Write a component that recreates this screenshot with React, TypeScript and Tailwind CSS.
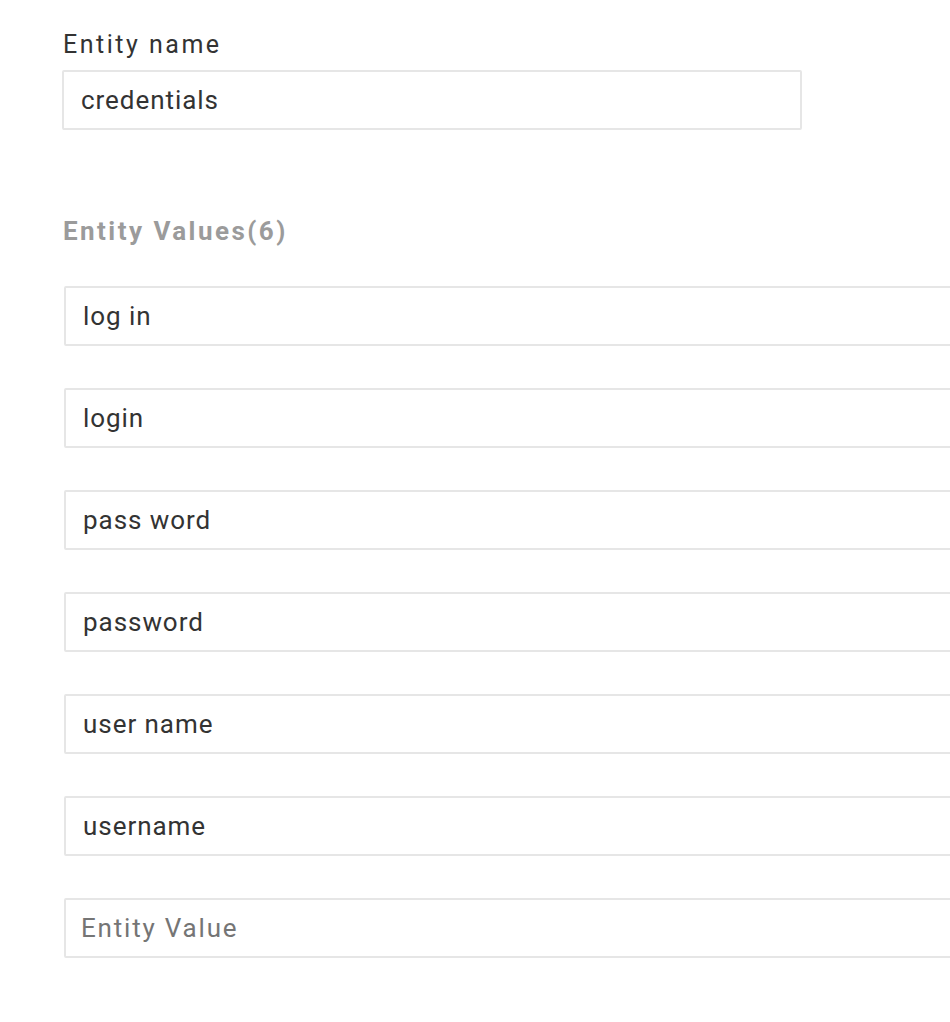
import React, { useState } from "react";

const initialValues = ["log in", "login", "pass word", "password", "user name", "username"];

const App: React.FC = () => {
  const [name, setName] = useState("credentials");
  const [values, setValues] = useState<string[]>(initialValues);
  const [draft, setDraft] = useState("");

  return (
    <div
      className="w-[950px] h-[1022px] overflow-hidden bg-white text-[#333333]"
      style={{ fontFamily: "Roboto, 'Liberation Sans', sans-serif" }}
    >
      <div className="pl-[62px] pt-[28px]">
        <label className="block pl-[1px] text-[25px] leading-[34px] tracking-[2.5px]">Entity name</label>
        <input
          type="text"
          value={name}
          onChange={(e) => setName(e.target.value)}
          className="mt-[8px] block w-[740px] h-[60px] border-2 border-[#e6e6e6] rounded-[2px] px-[17px] text-[26px] tracking-[0.95px] outline-none"
        />

        <h3 className="mt-[84px] pl-[1px] text-[26px] leading-[34px] font-bold text-[#9b9b9b] tracking-[2.45px]">
          Entity Values({values.length})
        </h3>

        <div className="mt-[38px] pl-[2px] flex flex-col gap-[42px]">
          {values.map((v, i) => (
            <input
              key={i}
              type="text"
              value={v}
              onChange={(e) =>
                setValues((prev) => prev.map((p, j) => (j === i ? e.target.value : p)))
              }
              className="block w-[1000px] h-[60px] border-2 border-[#e6e6e6] rounded-[2px] px-[17px] text-[26px] tracking-[0.95px] outline-none"
            />
          ))}
          <input
            type="text"
            value={draft}
            onChange={(e) => setDraft(e.target.value)}
            placeholder="Entity Value"
            className="block w-[1000px] h-[60px] border-2 border-[#e6e6e6] rounded-[2px] px-[15px] text-[26px] tracking-[1.8px] outline-none placeholder:text-[#757575]"
          />
        </div>
      </div>
    </div>
  );
};

export default App;
